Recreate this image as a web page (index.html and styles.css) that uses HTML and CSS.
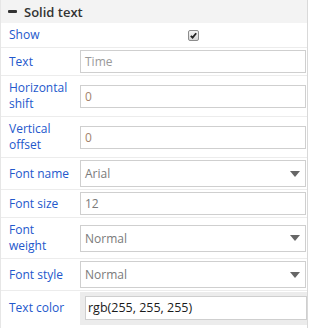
FILE: index.html
```html
<!DOCTYPE html>
<html>
<head>
<meta charset="utf-8">
<link rel="stylesheet" href="styles.css">
</head>
<body>
<div class="panel">
  <div class="header"><span class="minus"></span><span class="title">Solid text</span></div>
  <div class="row r-show">
    <div class="label">Show</div>
    <div class="value center">
      <span class="check"><svg width="7" height="7" viewBox="0 0 7 7"><path d="M0.8 3.8 L2.6 5.6 L6.2 1.2" fill="none" stroke="#222" stroke-width="1.8"/></svg></span>
    </div>
  </div>
  <div class="row">
    <div class="label">Text</div>
    <div class="value"><div class="input placeholder">Time</div></div>
  </div>
  <div class="row">
    <div class="label">Horizontal shift</div>
    <div class="value"><div class="input num">0</div></div>
  </div>
  <div class="row">
    <div class="label">Vertical offset</div>
    <div class="value"><div class="input num">0</div></div>
  </div>
  <div class="row">
    <div class="label">Font name</div>
    <div class="value"><div class="select"><span>Arial</span><i class="arrow"></i></div></div>
  </div>
  <div class="row">
    <div class="label">Font size</div>
    <div class="value"><div class="input muted">12</div></div>
  </div>
  <div class="row">
    <div class="label">Font weight</div>
    <div class="value"><div class="select"><span>Normal</span><i class="arrow"></i></div></div>
  </div>
  <div class="row">
    <div class="label">Font style</div>
    <div class="value"><div class="select"><span>Normal</span><i class="arrow"></i></div></div>
  </div>
  <div class="row last">
    <div class="label">Text color</div>
    <div class="value colorwrap"><div class="input dark">rgb(255, 255, 255)</div></div>
  </div>
</div>
</body>
</html>
```

FILE: styles.css
```css
html, body {
  margin: 0;
  padding: 0;
  background: #fff;
}
body {
  font-family: "Open Sans", "Liberation Sans", sans-serif;
  font-size: 12px;
  color: #333;
}
.panel {
  width: 308px;
  box-sizing: border-box;
  border-left: 1px solid #e6e6e6;
  border-right: 1px solid #d9d9d9;
  min-height: 328px;
}
.header {
  height: 23px;
  background: #f3f3f3;
  display: flex;
  align-items: center;
  padding-left: 7px;
}
.minus {
  width: 9px;
  height: 3px;
  background: #333;
  border-radius: 1px;
  margin-right: 7px;
}
.title {
  font-size: 13px;
  font-weight: 600;
  color: #333;
}
.row {
  display: grid;
  grid-template-columns: 79px 1fr;
  border-bottom: 1px solid #ececec;
}
.row.last {
  border-bottom: none;
}
.label {
  color: #2358cc;
  line-height: 16px;
  padding: 4px 6px 4px 8px;
  align-self: center;
}
.value {
  display: flex;
  align-items: center;
  padding: 2px 1px 2px 0;
}
.value.center {
  justify-content: center;
  padding-left: 1px;
}
.check {
  width: 9px;
  height: 9px;
  border: 1px solid #8c8c8c;
  border-radius: 2px;
  background: linear-gradient(#f4f4f4, #d6d6d6);
  display: flex;
  align-items: center;
  justify-content: center;
}
.input {
  flex: 1;
  height: 23px;
  box-sizing: border-box;
  border: 1px solid #cfcfcf;
  background: #fff;
  padding: 0 4px;
  line-height: 21px;
  font-size: 12px;
  white-space: nowrap;
}
.placeholder { color: #9a9a9a; }
.num { color: #a3826c; }
.muted { color: #7a7a7a; }
.dark { color: #1a1a1a; font-size: 12.5px; }
.select {
  flex: 1;
  height: 27px;
  box-sizing: border-box;
  border: 1px solid #cfcfcf;
  background: #fff;
  padding: 0 5px 0 4px;
  display: flex;
  align-items: center;
  justify-content: space-between;
  color: #7a7a7a;
}
.arrow {
  width: 0;
  height: 0;
  border-left: 5px solid transparent;
  border-right: 5px solid transparent;
  border-top: 6px solid #666;
}
.colorwrap {
  background: #ececec;
  padding: 4px 0 5px 5px;
  margin-top: 1px;
}
.colorwrap .input {
  height: 24px;
  line-height: 22px;
  padding-left: 2px;
}
```
